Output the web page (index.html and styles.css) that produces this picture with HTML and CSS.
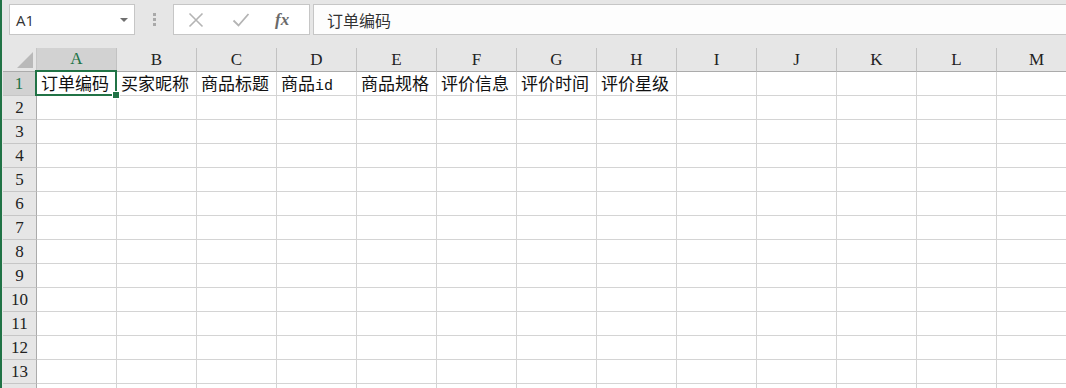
FILE: index.html
```html
<!DOCTYPE html>
<html lang="zh-CN">
<head>
<meta charset="utf-8">
<title>Sheet</title>
<link rel="stylesheet" href="styles.css">
</head>
<body>
<div class="app">
  <div class="toolbar">
    <div class="namebox">
      <span class="nb-text">A1</span>
      <svg class="nb-arrow" width="8" height="4" viewBox="0 0 8 4"><path d="M0 0H8L4 4Z" fill="#6f6f6f"/></svg>
    </div>
    <div class="grip"><i></i><i></i><i></i></div>
    <div class="fbtns">
      <svg class="fb-x" width="16" height="16" viewBox="0 0 16 16"><path d="M1.5 1.5L14.5 14.5M14.5 1.5L1.5 14.5" stroke="#b4b4b4" stroke-width="1.6" fill="none"/></svg>
      <svg class="fb-ok" width="18" height="16" viewBox="0 0 18 16"><path d="M1.5 8.5L6.5 13.5L16.5 2" stroke="#b4b4b4" stroke-width="1.8" fill="none"/></svg>
      <span class="fb-fx">fx</span>
    </div>
    <div class="finput">订单编码</div>
  </div>
  <div class="sheet">
    <div class="corner"><svg width="16" height="16" viewBox="0 0 16 16"><path d="M16 0V16H0Z" fill="#b9b9b9"/></svg></div>
    <div class="ch sel">A</div><div class="ch">B</div><div class="ch">C</div><div class="ch">D</div><div class="ch">E</div><div class="ch">F</div><div class="ch">G</div><div class="ch">H</div><div class="ch">I</div><div class="ch">J</div><div class="ch">K</div><div class="ch">L</div><div class="ch">M</div>

    <div class="rh sel">1</div>
    <div class="c active">订单编码</div><div class="c">买家昵称</div><div class="c">商品标题</div><div class="c">商品<span class="latin">id</span></div><div class="c">商品规格</div><div class="c">评价信息</div><div class="c">评价时间</div><div class="c">评价星级</div><div class="c"></div><div class="c"></div><div class="c"></div><div class="c"></div><div class="c"></div>

    <div class="rh">2</div><div class="c"></div><div class="c"></div><div class="c"></div><div class="c"></div><div class="c"></div><div class="c"></div><div class="c"></div><div class="c"></div><div class="c"></div><div class="c"></div><div class="c"></div><div class="c"></div><div class="c"></div>
    <div class="rh">3</div><div class="c"></div><div class="c"></div><div class="c"></div><div class="c"></div><div class="c"></div><div class="c"></div><div class="c"></div><div class="c"></div><div class="c"></div><div class="c"></div><div class="c"></div><div class="c"></div><div class="c"></div>
    <div class="rh">4</div><div class="c"></div><div class="c"></div><div class="c"></div><div class="c"></div><div class="c"></div><div class="c"></div><div class="c"></div><div class="c"></div><div class="c"></div><div class="c"></div><div class="c"></div><div class="c"></div><div class="c"></div>
    <div class="rh">5</div><div class="c"></div><div class="c"></div><div class="c"></div><div class="c"></div><div class="c"></div><div class="c"></div><div class="c"></div><div class="c"></div><div class="c"></div><div class="c"></div><div class="c"></div><div class="c"></div><div class="c"></div>
    <div class="rh">6</div><div class="c"></div><div class="c"></div><div class="c"></div><div class="c"></div><div class="c"></div><div class="c"></div><div class="c"></div><div class="c"></div><div class="c"></div><div class="c"></div><div class="c"></div><div class="c"></div><div class="c"></div>
    <div class="rh">7</div><div class="c"></div><div class="c"></div><div class="c"></div><div class="c"></div><div class="c"></div><div class="c"></div><div class="c"></div><div class="c"></div><div class="c"></div><div class="c"></div><div class="c"></div><div class="c"></div><div class="c"></div>
    <div class="rh">8</div><div class="c"></div><div class="c"></div><div class="c"></div><div class="c"></div><div class="c"></div><div class="c"></div><div class="c"></div><div class="c"></div><div class="c"></div><div class="c"></div><div class="c"></div><div class="c"></div><div class="c"></div>
    <div class="rh">9</div><div class="c"></div><div class="c"></div><div class="c"></div><div class="c"></div><div class="c"></div><div class="c"></div><div class="c"></div><div class="c"></div><div class="c"></div><div class="c"></div><div class="c"></div><div class="c"></div><div class="c"></div>
    <div class="rh">10</div><div class="c"></div><div class="c"></div><div class="c"></div><div class="c"></div><div class="c"></div><div class="c"></div><div class="c"></div><div class="c"></div><div class="c"></div><div class="c"></div><div class="c"></div><div class="c"></div><div class="c"></div>
    <div class="rh">11</div><div class="c"></div><div class="c"></div><div class="c"></div><div class="c"></div><div class="c"></div><div class="c"></div><div class="c"></div><div class="c"></div><div class="c"></div><div class="c"></div><div class="c"></div><div class="c"></div><div class="c"></div>
    <div class="rh">12</div><div class="c"></div><div class="c"></div><div class="c"></div><div class="c"></div><div class="c"></div><div class="c"></div><div class="c"></div><div class="c"></div><div class="c"></div><div class="c"></div><div class="c"></div><div class="c"></div><div class="c"></div>
    <div class="rh">13</div><div class="c"></div><div class="c"></div><div class="c"></div><div class="c"></div><div class="c"></div><div class="c"></div><div class="c"></div><div class="c"></div><div class="c"></div><div class="c"></div><div class="c"></div><div class="c"></div><div class="c"></div>
    <div class="rh"></div><div class="c"></div><div class="c"></div><div class="c"></div><div class="c"></div><div class="c"></div><div class="c"></div><div class="c"></div><div class="c"></div><div class="c"></div><div class="c"></div><div class="c"></div><div class="c"></div><div class="c"></div>
  </div>
</div>
</body>
</html>
```

FILE: styles.css
```css
* { box-sizing: border-box; }
html, body {
  margin: 0;
  padding: 0;
  width: 1066px;
  height: 388px;
  overflow: hidden;
  background: #e6e6e6;
}
.app {
  width: 1066px;
  height: 388px;
  overflow: hidden;
  background: #e6e6e6;
  border-left: 2px solid #217346;
  padding-left: 1px;
  display: flex;
  flex-direction: column;
}
.toolbar {
  height: 48px;
  flex: none;
  display: flex;
  align-items: flex-start;
  padding-top: 4px;
  padding-left: 6px;
}
.namebox {
  width: 126px;
  height: 31px;
  background: #fff;
  border: 1px solid #c6c6c6;
  display: flex;
  align-items: center;
  justify-content: space-between;
  padding: 0 6px 0 6px;
}
.nb-text {
  font-family: "Open Sans", "Liberation Sans", sans-serif;
  font-size: 15px;
  color: #333;
}
.nb-arrow { margin-top: 1px; }
.grip {
  width: 38px;
  height: 31px;
  display: flex;
  flex-direction: column;
  align-items: center;
  justify-content: center;
  gap: 2px;
}
.grip i {
  display: block;
  width: 3px;
  height: 3px;
  background: #a9a9a9;
}
.fbtns {
  width: 137px;
  height: 31px;
  background: #fff;
  border: 1px solid #c6c6c6;
  display: flex;
  align-items: center;
  padding-left: 14px;
}
.fb-x { margin-right: 28px; }
.fb-ok { margin-right: 25px; }
.fb-fx {
  font-family: "Liberation Serif", serif;
  font-style: italic;
  font-weight: bold;
  font-size: 17px;
  color: #6a6a6a;
}
.finput {
  margin-left: 3px;
  flex: 1;
  height: 31px;
  background: #fdfdfd;
  border: 1px solid #c6c6c6;
  border-right: none;
  padding-left: 13px;
  display: flex;
  align-items: center;
  font-family: "Noto Sans CJK SC", sans-serif;
  font-size: 16px;
  color: #333;
}
.sheet {
  display: grid;
  grid-template-columns: 34px repeat(13, 80px);
  grid-auto-rows: 24px;
  width: 1074px;
}
.corner {
  background: #e6e6e6;
  border-right: 1px solid #c6c6c6;
  border-bottom: 1px solid #ababab;
  display: flex;
  align-items: flex-end;
  justify-content: flex-end;
  padding: 0 3px 3px 0;
}
.ch {
  background: #e6e6e6;
  border-right: 1px solid #c2c2c2;
  border-bottom: 1px solid #ababab;
  display: flex;
  align-items: center;
  justify-content: center;
  font-family: "Liberation Serif", serif;
  font-size: 17px;
  color: #222;
}
.ch.sel {
  background: #d2d2d2;
  color: #217346;
  border-bottom: 2px solid #217346;
}
.rh {
  background: #e6e6e6;
  border-right: 1px solid #ababab;
  border-bottom: 1px solid #c6c6c6;
  display: flex;
  align-items: center;
  justify-content: center;
  font-family: "Liberation Serif", serif;
  font-size: 17px;
  color: #222;
}
.rh.sel {
  background: #d2d2d2;
  color: #217346;
  border-right: 2px solid #217346;
}
.c {
  background: #fff;
  border-right: 1px solid #d4d4d4;
  border-bottom: 1px solid #d4d4d4;
  display: block;
  line-height: 22px;
  padding-left: 4px;
  white-space: nowrap;
  font-family: "Noto Sans CJK SC", sans-serif;
  font-size: 17px;
  color: #111;
}
.latin {
  font-family: "Liberation Mono", monospace;
  font-size: 15px;
}
.active { position: relative; }
.active::before {
  content: "";
  position: absolute;
  left: -2px;
  top: -2px;
  right: -1px;
  bottom: -1px;
  border: 2px solid #217346;
}
.active::after {
  content: "";
  position: absolute;
  right: -4px;
  bottom: -4px;
  width: 6px;
  height: 6px;
  background: #217346;
  border: 1px solid #fff;
}
```
